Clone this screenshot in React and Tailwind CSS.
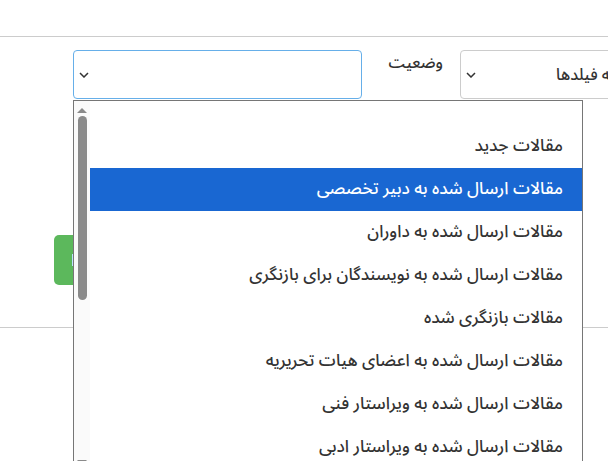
import React from 'react';

const options = [
  'مقالات جدید',
  'مقالات ارسال شده به دبیر تخصصی',
  'مقالات ارسال شده به داوران',
  'مقالات ارسال شده به نویسندگان برای بازنگری',
  'مقالات بازنگری شده',
  'مقالات ارسال شده به اعضای هیات تحریریه',
  'مقالات ارسال شده به ویراستار فنی',
  'مقالات ارسال شده به ویراستار ادبی',
];

const Chevron = () => (
  <svg width="10" height="6" viewBox="0 0 10 6" className="shrink-0">
    <path d="M1 1l4 4 4-4" fill="none" stroke="#333" strokeWidth="1.5" />
  </svg>
);

export default function App() {
  const selected = 1;

  return (
    <div
      className="relative w-[608px] h-[461px] bg-white overflow-hidden text-[#333]"
      style={{ fontFamily: '"Noto Sans Arabic", "DejaVu Sans", sans-serif' }}
    >
      {/* header strip */}
      <div className="h-[37px] border-b border-[#ccc]" />

      {/* filter row */}
      <div className="flex items-start pt-[13px] pl-[73px]">
        <div className="shrink-0 flex items-center w-[289px] h-[49px] border border-[#66afe9] rounded-[4px] pl-[5px]">
          <Chevron />
        </div>
        <div dir="rtl" className="shrink-0 ml-[27px] w-[54px] pt-[3px] text-[16px] font-medium leading-[20px] text-[#333]">
          وضعیت
        </div>
        <div className="flex items-center shrink-0 ml-[17px] w-[220px] h-[49px] border border-[#ccc] rounded-[4px] pl-[5px]">
          <Chevron />
          <span dir="rtl" className="ml-[80px] text-[16px] font-medium whitespace-nowrap">
            همه فیلدها
          </span>
        </div>
      </div>

      {/* search button */}
      <div className="mt-[136px] ml-[54px] flex items-center w-[120px] h-[50px] bg-[#5cb85c] rounded-[5px] pl-[18px]">
        <span className="w-[2px] h-[12px] bg-[#bde4ff]" />
      </div>

      <div className="mt-[42px] border-b border-[#ccc]" />

      {/* opened select list */}
      <div className="absolute left-[73px] top-[100px] w-[510px] h-[370px] flex border border-[#767676] bg-white">
        <div className="w-[16px] bg-[#fafafa] flex flex-col items-center">
          <div className="mt-[7px] w-0 h-0 border-l-[5px] border-r-[5px] border-b-[5px] border-l-transparent border-r-transparent border-b-[#8a8a8a]" />
          <div className="mt-[3px] w-[9px] h-[184px] rounded-full bg-[#8a8a8a]" />
          <div className="mt-auto mb-[4px] w-0 h-0 border-l-[5px] border-r-[5px] border-t-[5px] border-l-transparent border-r-transparent border-t-[#8a8a8a]" />
        </div>
        <div dir="rtl" className="flex-1 pt-[24px]">
          {options.map((opt, i) => (
            <div
              key={i}
              className={
                'h-[43px] flex items-center pr-[19px] text-[17px] font-medium whitespace-nowrap ' +
                (i === selected ? 'bg-[#1967d2] text-white' : 'text-[#333]')
              }
            >
              {opt}
            </div>
          ))}
        </div>
      </div>
    </div>
  );
}
